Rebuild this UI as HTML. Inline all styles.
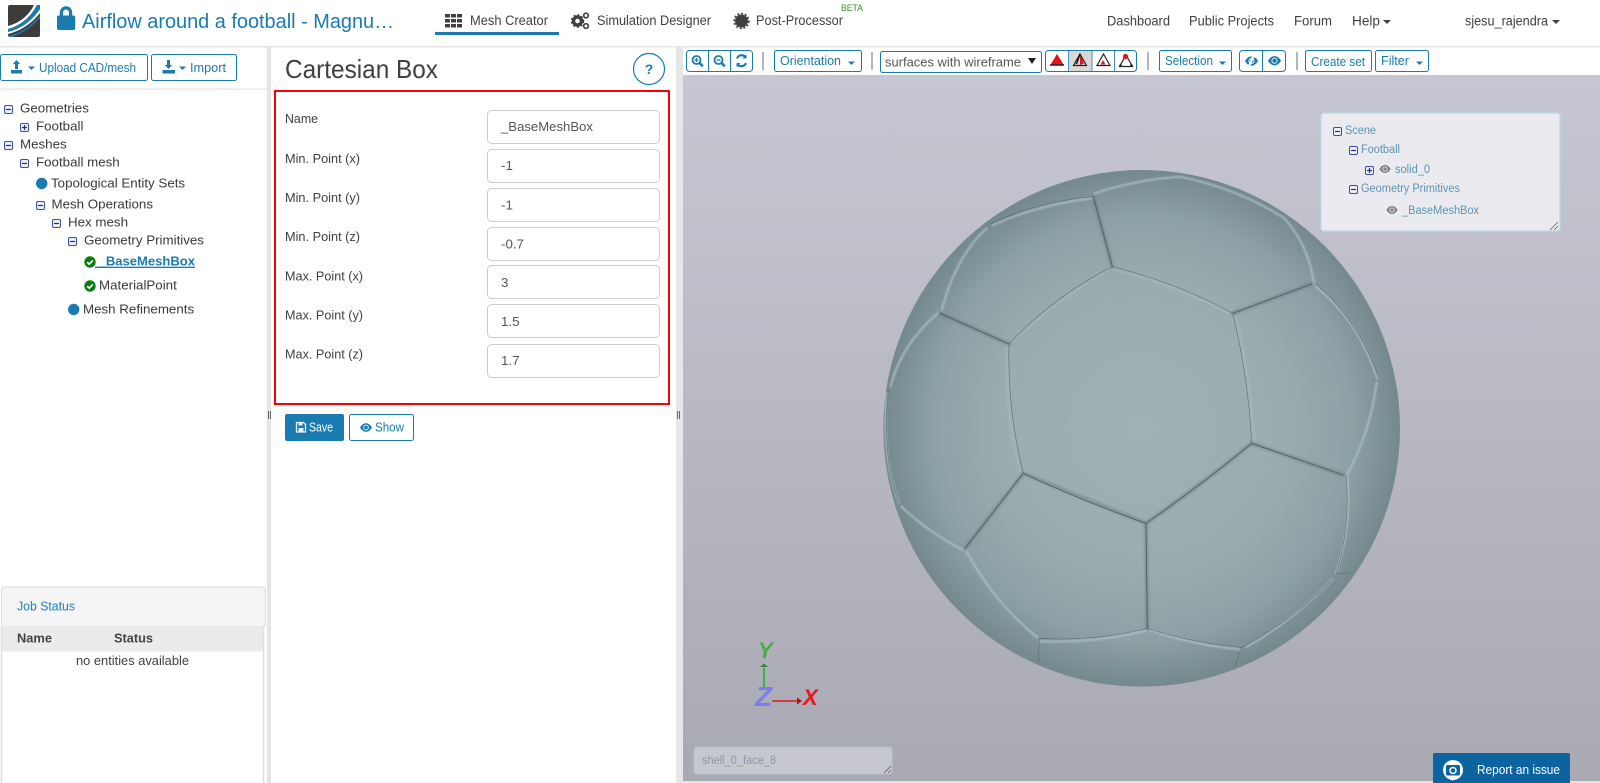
<!DOCTYPE html>
<html><head><meta charset="utf-8"><title>Cartesian Box</title>
<style>
html,body{margin:0;padding:0;width:1600px;height:783px;overflow:hidden;background:#fff}
svg{display:block;position:absolute;left:0;top:0}
text{font-family:"Liberation Sans",sans-serif;white-space:pre}
.b{fill:#1a7bb0}
.d{fill:#404040}
.n{font-size:13.5px;fill:#404040}
.tb{font-size:12.5px;fill:#1a7bb0}
.tr{font-size:13.33px;fill:#3a3a3a}
.lb{font-size:12.5px;fill:#404040}
.iv{font-size:13.33px;fill:#555}
.inp{fill:#fff;stroke:#ccc;stroke-width:1}
.btn{fill:#fff;stroke:#1a7bb0;stroke-width:1}
.sep{stroke:#b4b6bd;stroke-width:2}
.st{font-size:11.5px;fill:#5c93b3}
.seamD{fill:none;stroke:#4d5e62;stroke-width:2.6;stroke-linejoin:round;stroke-linecap:round}
.seamT{fill:none;stroke:#56696d;stroke-width:1.6;stroke-linecap:round}
.seamS{fill:none;stroke:#5d7074;stroke-width:12;opacity:.4;stroke-linecap:round}
.seamL{fill:none;stroke:#adc4c8;stroke-width:8;opacity:.6;stroke-linecap:round}
</style></head>
<body>
<svg width="1600" height="783" viewBox="0 0 1600 783" xmlns="http://www.w3.org/2000/svg">
<defs>
<linearGradient id="bg" x1="0" y1="0" x2="0" y2="1"><stop offset="0" stop-color="#c7c7d3"/><stop offset="1" stop-color="#a9a9b3"/></linearGradient>
<radialGradient id="ball" cx=".5" cy=".5" r=".5"><stop offset="0" stop-color="#9eb1b5"/><stop offset=".55" stop-color="#99adb1"/><stop offset=".82" stop-color="#8ca1a5"/><stop offset="1" stop-color="#74898d"/></radialGradient>
<filter id="soft" x="-5%" y="-5%" width="110%" height="110%"><feGaussianBlur stdDeviation="3"/></filter>
<filter id="soft2" x="-5%" y="-5%" width="110%" height="110%"><feGaussianBlur stdDeviation="1.6"/></filter>
<symbol id="minus" viewBox="0 0 9 9" overflow="visible"><rect x=".5" y=".5" width="8" height="8" rx="1.5" fill="#eef0f6" stroke="#3c4aa8"/><path d="M2 4.5h5" stroke="#25307f" stroke-width="1.2"/></symbol>
<symbol id="plus" viewBox="0 0 9 9" overflow="visible"><rect x=".5" y=".5" width="8" height="8" rx="1.5" fill="#eef0f6" stroke="#3c4aa8"/><path d="M2 4.5h5M4.5 2v5" stroke="#25307f" stroke-width="1.2"/></symbol>
<symbol id="check" viewBox="0 0 12 12"><circle cx="6" cy="6" r="5.7" fill="#0a7d0f"/><path d="M3.2 6.2l2 2 3.6-3.8" fill="none" stroke="#fff" stroke-width="1.7"/></symbol>
<symbol id="eye" viewBox="0 0 14 10"><path d="M0 5C2 1.5 4.5 0 7 0s5 1.500 7 5c-2 3.500-4.500 5-7 5S2 8.500 0 5z" fill="currentColor"/><circle cx="7" cy="5" r="3.300" fill="#fff" opacity=".85"/><circle cx="7" cy="5" r="2.200" fill="currentColor"/></symbol>
<symbol id="tri" viewBox="0 0 16 16"><path d="M8 2L14.500 13.500H1.500z" fill="none" stroke="#222" stroke-width="1.200"/></symbol>
</defs>

<!-- header -->
<rect x="0" y="0" width="1600" height="46" fill="#fff"/>
<rect x="0" y="46" width="1600" height="1.500" fill="#e4e4e4"/>
<g>
<rect x="8" y="5" width="32" height="32" rx="2" fill="#3f3b38"/>
<path d="M8 26C20 23 29 15 34 5H37C31 17 20 26 8 29z" fill="#fff"/>
<path d="M8 29C20 26 31 17 37 5H40V9C33 20 21 29 8 32z" fill="#1a7bb0"/>
<path d="M8 32C21 29 33 20 40 9V13C32 23 21 31 8 34z" fill="#fff"/>
<path d="M9 35.500C22 33 33 24 40 15V18C33 26 23 33 12 37H9z" fill="#1a7bb0"/>
</g>
<path d="M57 17.500a2 2 0 0 1 2-2h.800v-3a6.200 6.200 0 0 1 12.400 0v3h1a2 2 0 0 1 2 2V28a2 2 0 0 1-2 2H59a2 2 0 0 1-2-2zM63 15.500h6v-3a3 3 0 0 0-6 0z" fill="#1a7bb0" fill-rule="evenodd"/>
<text x="82" y="28" font-size="20" class="b" textLength="312" lengthAdjust="spacingAndGlyphs">Airflow around a football - Magnu…</text>

<g fill="#404040"><rect x="445" y="14" width="5" height="3.500"/><rect x="451" y="14" width="5" height="3.500"/><rect x="457" y="14" width="5" height="3.500"/><rect x="445" y="19" width="5" height="3.500"/><rect x="451" y="19" width="5" height="3.500"/><rect x="457" y="19" width="5" height="3.500"/><rect x="445" y="24" width="5" height="3.500"/><rect x="451" y="24" width="5" height="3.500"/><rect x="457" y="24" width="5" height="3.500"/></g>
<text x="470" y="25" class="n" textLength="78" lengthAdjust="spacingAndGlyphs">Mesh Creator</text>
<rect x="435" y="32" width="124" height="3" fill="#1a7bb0"/>
<g fill="none" stroke="#404040"><circle cx="577.500" cy="21" r="4" stroke-width="3.400"/><circle cx="577.500" cy="21" r="6" stroke-width="1.500" stroke-dasharray="2 2"/><circle cx="586" cy="15.500" r="2.300" stroke-width="1.700"/><circle cx="586" cy="26" r="2.300" stroke-width="1.700"/></g>
<text x="597" y="25" class="n" textLength="114" lengthAdjust="spacingAndGlyphs">Simulation Designer</text>
<circle cx="741.500" cy="21" r="6.500" fill="#404040"/><circle cx="741.500" cy="21" r="7.400" fill="none" stroke="#404040" stroke-width="1.600" stroke-dasharray="2 1.800"/>
<text x="756" y="25" class="n" textLength="87" lengthAdjust="spacingAndGlyphs">Post-Processor</text>
<text x="841" y="11" font-size="9" fill="#2f9a1e" textLength="22" lengthAdjust="spacingAndGlyphs">BETA</text>
<text x="1107" y="25.500" class="n" textLength="63" lengthAdjust="spacingAndGlyphs">Dashboard</text>
<text x="1189" y="25.500" class="n" textLength="85" lengthAdjust="spacingAndGlyphs">Public Projects</text>
<text x="1294" y="25.500" class="n" textLength="38" lengthAdjust="spacingAndGlyphs">Forum</text>
<text x="1352" y="25.500" class="n" textLength="28" lengthAdjust="spacingAndGlyphs">Help</text>
<path d="M1383 20h8l-4 4z" fill="#404040"/>
<text x="1465" y="25.500" class="n" textLength="83" lengthAdjust="spacingAndGlyphs">sjesu_rajendra</text>
<path d="M1552 20h8l-4 4z" fill="#404040"/>

<!-- splitters -->
<rect x="267" y="47" width="4" height="736" fill="#e4e4e4"/>
<rect x="676" y="47" width="7" height="736" fill="#e6e6e6"/>
<path d="M268.500 411v8M270.500 411v8M677.500 411v8M679.500 411v8" stroke="#666" stroke-width="1"/>

<!-- left sidebar -->
<rect x=".5" y="54.500" width="147" height="26" rx="2" class="btn"/>
<path d="M16.500 60l3.700 4h-2.200v5h-3v-5h-2.200zM11 70h11v3.500H11z" fill="#1a7bb0"/>
<path d="M28 66.500h7l-3.500 3.500z" fill="#1a7bb0"/>
<text x="39" y="72" class="tb" textLength="97" lengthAdjust="spacingAndGlyphs">Upload CAD/mesh</text>
<rect x="151.500" y="54.500" width="85" height="26" rx="2" class="btn"/>
<path d="M167 60h3v5h2.200l-3.700 4-3.700-4H167zM162.500 70H175v3.500h-12.500z" fill="#1a7bb0"/>
<path d="M179 66.500h7l-3.500 3.500z" fill="#1a7bb0"/>
<text x="190" y="72" class="tb" textLength="36" lengthAdjust="spacingAndGlyphs">Import</text>
<rect x="0" y="88.500" width="267" height="1.200" fill="#e4e4e4"/>

<use href="#minus" x="4" y="105" width="9" height="9"/><text x="20" y="112.700" class="tr">Geometries</text>
<use href="#plus" x="20" y="123" width="9" height="9"/><text x="36" y="130.700" class="tr">Football</text>
<use href="#minus" x="4" y="141" width="9" height="9"/><text x="20" y="148.700" class="tr">Meshes</text>
<use href="#minus" x="20" y="159" width="9" height="9"/><text x="36" y="166.700" class="tr">Football mesh</text>
<circle cx="41.700" cy="183.500" r="5.700" fill="#1a7bb0"/><text x="51" y="187.700" class="tr">Topological Entity Sets</text>
<use href="#minus" x="36" y="201" width="9" height="9"/><text x="51.500" y="208.700" class="tr">Mesh Operations</text>
<use href="#minus" x="52" y="219" width="9" height="9"/><text x="68" y="226.700" class="tr">Hex mesh</text>
<use href="#minus" x="68" y="237" width="9" height="9"/><text x="84" y="244.700" class="tr">Geometry Primitives</text>
<use href="#check" x="84" y="256" width="12" height="12"/><text x="95" y="265.700" class="tr" style="font-weight:bold;fill:#1a7bb0;text-decoration:underline" textLength="100" lengthAdjust="spacingAndGlyphs"> _BaseMeshBox</text>
<use href="#check" x="84" y="280" width="12" height="12"/><text x="99" y="289.700" class="tr">MaterialPoint</text>
<circle cx="73.700" cy="309.500" r="5.700" fill="#1a7bb0"/><text x="83" y="313.700" class="tr">Mesh Refinements</text>

<!-- job status -->
<rect x="1.500" y="587" width="264" height="40" rx="3" fill="#f4f4f4" stroke="#ddd"/>
<text x="17" y="610.700" font-size="13" fill="#1d82bb" textLength="58" lengthAdjust="spacingAndGlyphs">Job Status</text>
<rect x="2" y="627" width="261" height="156" fill="#fff"/>
<rect x="2" y="627" width="261" height="24.500" fill="#ebebeb"/>
<path d="M1.500 627v156M263.500 627v156" stroke="#e0e0e0" stroke-width="1.500"/>
<text x="17" y="642.700" font-size="13" font-weight="bold" fill="#444" textLength="35" lengthAdjust="spacingAndGlyphs">Name</text>
<text x="114" y="642.700" font-size="13" font-weight="bold" fill="#444" textLength="39" lengthAdjust="spacingAndGlyphs">Status</text>
<text x="76" y="665" font-size="13" fill="#404040" textLength="113" lengthAdjust="spacingAndGlyphs">no entities available</text>

<!-- middle panel -->
<text x="285" y="78" font-size="26" fill="#404040" textLength="153" lengthAdjust="spacingAndGlyphs">Cartesian Box</text>
<circle cx="649" cy="69" r="15.500" fill="#fff" stroke="#1a7bb0" stroke-width="1.200"/>
<text x="649" y="74" font-size="14" font-weight="bold" fill="#1a7bb0" text-anchor="middle">?</text>
<rect x="275" y="91" width="394" height="313" fill="none" stroke="#f00" stroke-width="2"/>

<text x="285" y="123" class="lb" textLength="33" lengthAdjust="spacingAndGlyphs">Name</text>
<text x="285" y="163" class="lb" textLength="75" lengthAdjust="spacingAndGlyphs">Min. Point (x)</text>
<text x="285" y="202" class="lb" textLength="75" lengthAdjust="spacingAndGlyphs">Min. Point (y)</text>
<text x="285" y="241" class="lb" textLength="75" lengthAdjust="spacingAndGlyphs">Min. Point (z)</text>
<text x="285" y="280.500" class="lb" textLength="78" lengthAdjust="spacingAndGlyphs">Max. Point (x)</text>
<text x="285" y="319.500" class="lb" textLength="78" lengthAdjust="spacingAndGlyphs">Max. Point (y)</text>
<text x="285" y="358.500" class="lb" textLength="78" lengthAdjust="spacingAndGlyphs">Max. Point (z)</text>

<rect x="487.500" y="110.500" width="172" height="33" rx="4" class="inp"/><text x="501" y="131" class="iv" textLength="92" lengthAdjust="spacingAndGlyphs">_BaseMeshBox</text>
<rect x="487.500" y="149.500" width="172" height="33" rx="4" class="inp"/><text x="501" y="170" class="iv">-1</text>
<rect x="487.500" y="188.500" width="172" height="33" rx="4" class="inp"/><text x="501" y="209.500" class="iv">-1</text>
<rect x="487.500" y="227.500" width="172" height="33" rx="4" class="inp"/><text x="501" y="248.400" class="iv">-0.7</text>
<rect x="487.500" y="265.500" width="172" height="33" rx="4" class="inp"/><text x="501" y="287" class="iv">3</text>
<rect x="487.500" y="304.500" width="172" height="33" rx="4" class="inp"/><text x="501" y="326" class="iv">1.5</text>
<rect x="487.500" y="344.500" width="172" height="33" rx="4" class="inp"/><text x="501" y="365" class="iv">1.7</text>

<rect x="285" y="414" width="59" height="27" rx="2" fill="#1a7bb0"/>
<path d="M296.500 422.500h7l2 2v7.500h-9z" fill="none" stroke="#e6f0f6" stroke-width="1.300"/><rect x="298.500" y="422.500" width="4" height="3" fill="#e6f0f6"/><rect x="298.500" y="428" width="5" height="3.500" fill="#e6f0f6"/>
<text x="309" y="431.700" font-size="12.500" fill="#fff" textLength="24" lengthAdjust="spacingAndGlyphs">Save</text>
<rect x="349.500" y="414.500" width="64" height="26" rx="2" class="btn"/>
<use href="#eye" x="360" y="423" width="12" height="9" style="color:#1a7bb0"/>
<text x="375" y="431.700" class="tb" textLength="29" lengthAdjust="spacingAndGlyphs">Show</text>

<!-- toolbar -->
<rect x="686.500" y="50.500" width="66" height="21" rx="3" class="btn"/>
<path d="M708.500 50.500v21M730.500 50.500v21" stroke="#1a7bb0"/>
<g fill="none" stroke="#1a7bb0" stroke-width="1.800"><circle cx="696.500" cy="60" r="4"/><path d="M699.500 63l3.300 3.300" stroke-width="2.600"/><path d="M694.500 60h4M696.500 58v4" stroke-width="1.300"/>
<circle cx="718.500" cy="60" r="4"/><path d="M721.500 63l3.300 3.300" stroke-width="2.600"/><path d="M716.500 60h4" stroke-width="1.300"/>
<path d="M737 58.500a5 5 0 0 1 8.500-1.500M746 63a5 5 0 0 1-8.500 1.500" stroke-width="2.200"/></g>
<path d="M746.500 54.500v4h-4zM736.500 67v-4h4z" fill="#1a7bb0"/>
<path class="sep" d="M763 52v18M872 52v18M1148 52v18M1297 52v18"/>
<rect x="774.500" y="50.500" width="87" height="21" rx="2" class="btn"/>
<text x="780" y="65" class="tb" textLength="61" lengthAdjust="spacingAndGlyphs">Orientation</text>
<path d="M848 61.500h7l-3.500 3.500z" fill="#1a7bb0"/>
<rect x="880.500" y="51.500" width="161" height="21" rx="2" class="btn"/>
<text x="885" y="66.500" font-size="13.330" fill="#555" textLength="136" lengthAdjust="spacingAndGlyphs">surfaces with wireframe</text>
<path d="M1028 58h8l-4 6z" fill="#222"/>
<rect x="1045.500" y="50.500" width="91" height="21" rx="3" class="btn"/>
<rect x="1068.500" y="51" width="23.500" height="20" fill="#d8d8d8"/>
<path d="M1068.500 50.500v21M1092 50.500v21M1114.500 50.500v21" stroke="#1a7bb0" stroke-width=".8"/>
<path d="M1057 54l6.500 10.500h-13z" fill="#e8131a"/><path d="M1050 65h14" stroke="#222" stroke-width="1.500"/>
<use href="#tri" x="1072" y="52" width="16" height="16"/><path d="M1080 54v11l4-1.500z" fill="#e8131a"/><path d="M1080 54l-3.500 10" stroke="#111" stroke-width="1.400"/>
<use href="#tri" x="1095.500" y="52" width="16" height="16"/><path d="M1103 60l2.500 4.500h-5z" fill="#e8131a"/>
<use href="#tri" x="1118" y="53" width="16" height="16"/><circle cx="1125.500" cy="56.500" r="2.600" fill="#e8131a"/><circle cx="1120.500" cy="65.500" r="1.300" fill="#222"/><circle cx="1131.500" cy="65.500" r="1.300" fill="#222"/>
<rect x="1159.500" y="50.500" width="72" height="21" rx="2" class="btn"/>
<text x="1165" y="65" class="tb" textLength="48" lengthAdjust="spacingAndGlyphs">Selection</text>
<path d="M1219 61.500h7l-3.500 3.500z" fill="#1a7bb0"/>
<rect x="1239.500" y="50.500" width="46" height="21" rx="3" class="btn"/><path d="M1262.500 50.500v21" stroke="#1a7bb0"/>
<use href="#eye" x="1245" y="56" width="13" height="10" style="color:#1a7bb0"/><path d="M1254 55l-5 11" stroke="#fff" stroke-width="2.400"/>
<use href="#eye" x="1268" y="56" width="13" height="9.500" style="color:#1a7bb0"/>
<rect x="1305.500" y="50.500" width="66" height="21" rx="2" class="btn"/>
<text x="1311" y="66" class="tb" textLength="54" lengthAdjust="spacingAndGlyphs">Create set</text>
<rect x="1375.500" y="50.500" width="53" height="21" rx="2" class="btn"/>
<text x="1381" y="65" class="tb" textLength="28" lengthAdjust="spacingAndGlyphs">Filter</text>
<path d="M1416 61.500h7l-3.500 3.500z" fill="#1a7bb0"/>

<!-- viewport -->
<rect x="683" y="75" width="917" height="706" fill="url(#bg)"/>
<rect x="683" y="781" width="917" height="2" fill="#e4e4e4"/>
<g transform="translate(860 160) scale(.33333)">
<circle cx="845" cy="805" r="775" fill="url(#ball)"/>
<!-- light raised bands -->
<g filter="url(#soft2)">
<path class="seamL" d="M700 114Q530 135 398 196M380 205Q290 285 245 450M704 100Q820 60 960 50M960 50Q1130 85 1262 168M1268 170Q1345 250 1362 372M1368 380Q1495 480 1552 655M1550 668Q1530 820 1460 945M1462 950Q1475 1100 1428 1240M1420 1255Q1300 1380 1160 1460M870 1410Q1000 1455 1140 1468M540 1444Q700 1450 858 1412M320 1175Q405 1330 532 1432M310 1170Q210 1120 124 1040M236 458Q125 550 92 678M80 700Q66 900 118 1030"/>
<path class="seamL" d="M760 328Q950 376 1112 462M748 328Q590 420 455 546M1128 470Q1170 650 1183 845M440 556Q435 760 480 935" style="opacity:.32"/>
</g>
<!-- heavy seams -->
<path class="seamS" filter="url(#soft)" d="M757 320L700 110M490 940L858 1090M858 1090Q1030 970 1175 850M1118 460L1355 372M1175 850L1450 945M858 1090L862 1405M490 940L315 1165M240 460L447 552"/>
<path class="seamD" d="M757 320L700 110M490 940Q660 1020 858 1090M858 1090Q1030 970 1175 850M1118 460L1355 372M1175 850L1450 945M858 1090L862 1405M490 940L315 1165M240 460L447 552"/>
<!-- thin seams -->
<path class="seamT" d="M757 320Q950 368 1118 460M1118 460Q1165 650 1175 850M490 940Q442 750 447 552M447 552Q580 410 757 320M700 110Q530 125 390 192M1368 372Q1495 480 1555 650M1458 945Q1472 1100 1428 1243M1430 1242L1475 1238M1425 1250Q1300 1380 1145 1462M862 1405Q1000 1450 1145 1462M538 1435Q700 1445 862 1405M538 1435L535 1505M1145 1462L1122 1525M85 690Q65 900 120 1035"/>
</g>

<!-- scene panel -->
<rect x="1321" y="113" width="239" height="118" rx="3" fill="#ebebef" stroke="#b7dbe8" stroke-width="1.200"/>
<use href="#minus" x="1333" y="127" width="9" height="9"/><text x="1345" y="134" class="st" textLength="31" lengthAdjust="spacingAndGlyphs">Scene</text>
<use href="#minus" x="1349" y="146" width="9" height="9"/><text x="1361" y="153" class="st" textLength="39" lengthAdjust="spacingAndGlyphs">Football</text>
<use href="#plus" x="1365" y="166" width="9" height="9"/><use href="#eye" x="1379" y="165" width="12" height="8" style="color:#808080"/><text x="1395" y="173" class="st" textLength="35" lengthAdjust="spacingAndGlyphs">solid_0</text>
<use href="#minus" x="1349" y="185" width="9" height="9"/><text x="1361" y="192" class="st" textLength="99" lengthAdjust="spacingAndGlyphs">Geometry Primitives</text>
<use href="#eye" x="1386" y="206" width="12" height="8" style="color:#808080"/><text x="1402" y="214" class="st" textLength="77" lengthAdjust="spacingAndGlyphs">_BaseMeshBox</text>
<path d="M1550 230l8-8M1554 230l4-4" stroke="#666" stroke-width=".8"/>

<!-- axes -->
<path d="M764 690V668" stroke="#45b04a" stroke-width="2.200"/><path d="M760 667l4-3.500 4 3.500z" fill="#3f7d43"/>
<path d="M772 701H799" stroke="#d71920" stroke-width="1.600"/><path d="M797 697.500l5 3.500-5 3.500z" fill="#9c1a22"/>
<text x="758" y="658" font-size="22" font-weight="bold" font-style="italic" fill="#45b04a">Y</text>
<text x="755" y="706" font-size="28" font-weight="bold" font-style="italic" fill="#7c7cf2">Z</text>
<text x="803" y="705" font-size="22" font-weight="bold" font-style="italic" fill="#e8151c">X</text>

<!-- selection text area -->
<rect x="694" y="747" width="198" height="27" rx="3" fill="#c6c7cf" stroke="#b4c3cc"/>
<text x="702" y="764" font-size="11.500" fill="#8b9aa8" textLength="74" lengthAdjust="spacingAndGlyphs">shell_0_face_8</text>
<path d="M884 773l7-7M888 773l3-3" stroke="#666" stroke-width=".8"/>

<!-- report -->
<path d="M1433 755a2 2 0 0 1 2-2h133a2 2 0 0 1 2 2v28h-137z" fill="#0b639f"/>
<circle cx="1453" cy="770" r="10" fill="#fff"/><rect x="1446" y="765" width="14" height="10.500" rx="1.500" fill="#0b639f"/><circle cx="1453" cy="770.500" r="3" fill="none" stroke="#fff" stroke-width="1.500"/><path d="M1449 778l4 3v-3z" fill="#fff"/>
<text x="1477" y="774" font-size="12.500" fill="#fff" textLength="83" lengthAdjust="spacingAndGlyphs">Report an issue</text>
</svg>
</body></html>
